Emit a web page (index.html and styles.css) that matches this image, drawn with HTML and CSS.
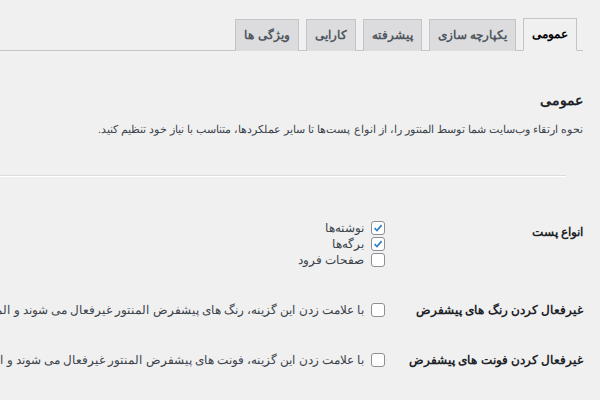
FILE: index.html
```
<!DOCTYPE html>
<html lang="fa" dir="rtl">
<head>
<meta charset="utf-8">
<link rel="stylesheet" href="styles.css">
</head>
<body>
<div class="wrap">
  <nav class="tabs">
    <a class="tab active">عمومی</a>
    <a class="tab">یکپارچه سازی</a>
    <a class="tab">پیشرفته</a>
    <a class="tab">کارایی</a>
    <a class="tab">ویژگی ها</a>
  </nav>
  <section class="intro">
    <h2 class="title">عمومی</h2>
    <p class="desc">نحوه ارتقاء وب‌سایت شما توسط المنتور را، از انواع پست‌ها تا سایر عملکردها، متناسب با نیاز خود تنظیم کنید.</p>
  </section>
  <hr class="sep">
  <div class="form">
    <div class="row row-types">
      <div class="th">انواع پست</div>
      <div class="td">
        <label class="opt"><span class="cb checked"><svg viewBox="0 0 14 14" width="14" height="14"><path d="M3 7.2 L5.8 10 L11.2 3.6" fill="none" stroke="#3582c4" stroke-width="2"/></svg></span><span>نوشته‌ها</span></label>
        <label class="opt"><span class="cb checked"><svg viewBox="0 0 14 14" width="14" height="14"><path d="M3 7.2 L5.8 10 L11.2 3.6" fill="none" stroke="#3582c4" stroke-width="2"/></svg></span><span>برگه‌ها</span></label>
        <label class="opt"><span class="cb"></span><span>صفحات فرود</span></label>
      </div>
    </div>
    <div class="row row-line">
      <div class="th">غیرفعال کردن رنگ های پیشفرض</div>
      <div class="td"><label class="opt long"><span class="cb"></span><span>با علامت زدن این گزینه، رنگ های پیشفرض المنتور غیرفعال می شوند و المنتور رنگ ها را از پوسته شما به ارث می برد.</span></label></div>
    </div>
    <div class="row row-line">
      <div class="th">غیرفعال کردن فونت های پیشفرض</div>
      <div class="td"><label class="opt long"><span class="cb"></span><span>با علامت زدن این گزینه، فونت های پیشفرض المنتور غیرفعال می شوند و المنتور فونت ها را از پوسته شما به ارث می برد.</span></label></div>
    </div>
  </div>
</div>
</body>
</html>
```
FILE: styles.css
```
html, body {
  margin: 0;
  padding: 0;
  background: #f0f0f1;
  overflow: hidden;
  width: 600px;
  height: 400px;
}
body {
  font-family: "Liberation Sans", sans-serif;
  font-size: 12px;
  color: #3c434a;
  direction: rtl;
}
.wrap {
  margin-right: 17px;
  width: 583px;
}
.tabs {
  display: flex;
  align-items: flex-end;
  padding-top: 18px;
  border-bottom: 1px solid #c3c4c7;
  height: 32px;
  box-sizing: content-box;
  padding-right: 6px;
}
.tab {
  display: block;
  box-sizing: border-box;
  height: 32px;
  line-height: 30px;
  padding: 0 8px;
  margin-left: 7px;
  border: 1px solid #c3c4c7;
  border-bottom: none;
  background: #dcdcde;
  color: #50575e;
  font-weight: bold;
  font-size: 12px;
  white-space: nowrap;
  margin-bottom: -1px;
}
.tab.active {
  background: #f0f0f1;
  color: #000;
  height: 33px;
  border-bottom: 1px solid #f0f0f1;
}
.intro {
  padding-top: 39px;
}
.title {
  margin: 0;
  font-size: 14px;
  font-weight: bold;
  color: #1d2327;
  line-height: 20px;
}
.desc {
  margin: 10px 0 0;
  font-size: 11px;
  line-height: 18px;
  white-space: nowrap;
}
.sep {
  margin: 37px 17px 0 0;
  width: 566px;
  border: 0;
  border-top: 1px solid #dcdcde;
  border-bottom: 1px solid #fff;
  height: 0;
}
.form {
  padding-top: 43px;
}
.row {
  display: flex;
  align-items: flex-start;
}
.th {
  width: 197px;
  flex: none;
  font-weight: bold;
  color: #1d2327;
  font-size: 11.5px;
  white-space: nowrap;
}
.td {
  display: flex;
  flex-direction: column;
}
.row-types .th {
  padding-top: 3px;
  line-height: 18px;
}
.row-line {
  align-items: center;
}
.row-line:nth-child(2) {
  margin-top: 34px;
}
.row-line:nth-child(3) {
  margin-top: 34px;
}
.opt {
  display: flex;
  align-items: center;
  height: 16px;
  white-space: nowrap;
  font-size: 11.5px;
  color: #3c434a;
}
.cb {
  flex: none;
  box-sizing: border-box;
  width: 14px;
  height: 14px;
  border: 1px solid #8c8f94;
  border-radius: 3px;
  background: #fff;
  margin-left: 7px;
  margin-right: 1px;
  display: flex;
  align-items: center;
  justify-content: center;
}
.cb svg {
  display: block;
}
```
